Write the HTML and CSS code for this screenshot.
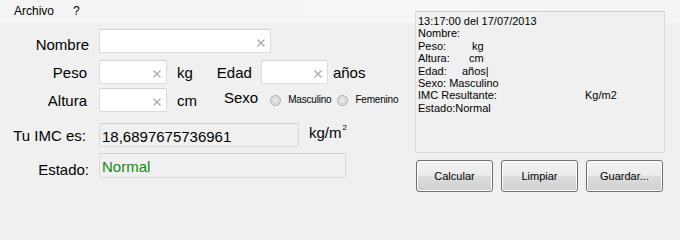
FILE: index.html
```html
<!DOCTYPE html>
<html lang="es">
<head>
<meta charset="utf-8">
<title>Calculadora IMC</title>
<link rel="stylesheet" href="styles.css">
</head>
<body>
<div class="window">
  <div class="menubar">
    <span class="menu-item">Archivo</span>
    <span class="menu-item">?</span>
  </div>

  <div class="form">
    <div class="row row-nombre">
      <label class="label label-low">Nombre</label>
      <div class="field field-wide"><svg class="clear" width="8" height="8" viewBox="0 0 8 8"><path d="M0.5 0.5 L7.5 7.5 M7.5 0.5 L0.5 7.5"/></svg></div>
    </div>
    <div class="row row-peso">
      <label class="label label-in">Peso</label>
      <div class="field field-short"><svg class="clear" width="8" height="8" viewBox="0 0 8 8"><path d="M0.5 0.5 L7.5 7.5 M7.5 0.5 L0.5 7.5"/></svg></div>
      <span class="unit">kg</span>
      <span class="label-edad">Edad</span>
      <div class="field field-edad"><svg class="clear" width="8" height="8" viewBox="0 0 8 8"><path d="M0.5 0.5 L7.5 7.5 M7.5 0.5 L0.5 7.5"/></svg></div>
      <span class="unit-anos">años</span>
    </div>
    <div class="row row-altura">
      <label class="label label-in">Altura</label>
      <div class="field field-short"><svg class="clear" width="8" height="8" viewBox="0 0 8 8"><path d="M0.5 0.5 L7.5 7.5 M7.5 0.5 L0.5 7.5"/></svg></div>
      <span class="unit">cm</span>
      <span class="label-sexo">Sexo</span>
      <span class="radio radio-first"></span><span class="radio-text">Masculino</span>
      <span class="radio"></span><span class="radio-text">Femenino</span>
    </div>
    <div class="row row-imc">
      <label class="label label-imc">Tu IMC es:</label>
      <div class="box box-imc">18,6897675736961</div>
      <span class="unit-imc">kg/m<sup class="sq">2</sup></span>
    </div>
    <div class="row row-estado">
      <label class="label label-low label-estado">Estado:</label>
      <div class="box box-estado">Normal</div>
    </div>
  </div>

  <div class="panel">
    <div class="log">
      <div>13:17:00 del 17/07/2013</div>
      <div>Nombre:</div>
      <div><span class="key key-peso">Peso:</span>kg</div>
      <div><span class="key key-altura">Altura:</span>cm</div>
      <div><span class="key key-edad">Edad:</span>años<span class="caret">|</span></div>
      <div>Sexo: Masculino</div>
      <div><span class="key key-imc">IMC Resultante:</span>Kg/m2</div>
      <div>Estado:Normal</div>
    </div>
    <div class="buttons">
      <button class="btn" type="button">Calcular</button>
      <button class="btn" type="button">Limpiar</button>
      <button class="btn" type="button">Guardar...</button>
    </div>
  </div>
</div>
</body>
</html>
```

FILE: styles.css
```css
html, body {
  margin: 0;
  padding: 0;
  background: #f0f0f0;
}

body {
  font-family: "Liberation Sans", Arial, sans-serif;
  color: #000;
}

.window {
  width: 680px;
  height: 209px;
  display: grid;
  grid-template-columns: 415px 250px 1fr;
  grid-template-rows: 23px auto;
  background: #f0f0f0;
  overflow: hidden;
}

/* ---------- menu ---------- */
.menubar {
  grid-column: 1 / 4;
  grid-row: 1;
  display: flex;
  align-items: center;
  background: linear-gradient(90deg, #f4f4f4 0%, #f6f6f6 60%, #f4f4f4 100%);
  font-size: 12px;
  line-height: 23px;
  padding-left: 14px;
}

.menu-item {
  margin-right: 19px;
}

/* ---------- form ---------- */
.form {
  grid-column: 1;
  grid-row: 2;
  display: flex;
  flex-direction: column;
  font-size: 15px;
  line-height: 17px;
}

.row {
  display: flex;
  align-items: center;
  height: 24px;
}

.row-nombre { margin-top: 6px; }
.row-peso { margin-top: 7px; }
.row-altura { margin-top: 4px; }
.row-imc { margin-top: 11px; }
.row-estado { margin-top: 6px; height: 25px; }

.label {
  box-sizing: border-box;
  width: 89px;
  margin-right: 10px;
  text-align: right;
  flex: none;
}

.label-low {
  align-self: flex-start;
  padding-top: 7px;
}

.label-estado {
  padding-top: 8px;
}

.label-in {
  padding-right: 2px;
}

.label-imc {
  padding-right: 3px;
}

.field {
  box-sizing: border-box;
  height: 24px;
  background: #ffffff;
  border: 1px solid #dcdcdc;
  border-top-color: #d2d2d2;
  border-radius: 2px;
  display: flex;
  justify-content: flex-end;
  align-items: center;
  padding-right: 5px;
  padding-top: 4px;
  flex: none;
}

.field-wide { width: 172px; }
.field-short { width: 68px; }
.field-edad { width: 67px; margin-left: 9px; }

.clear path {
  stroke: #a6a6a6;
  stroke-width: 1.2;
  fill: none;
}

.unit {
  margin-left: 10px;
}

.label-edad {
  margin-left: 24px;
}

.unit-anos {
  margin-left: 5px;
}

.label-sexo {
  margin-left: 27px;
  margin-bottom: 5px;
}

.radio {
  box-sizing: border-box;
  width: 11px;
  height: 11px;
  border-radius: 50%;
  border: 1px solid #a9a9a9;
  background: radial-gradient(circle at 50% 50%, #e6e6e6 0 2px, #d4d4d4 3px, #f4f4f4 5px);
  margin-left: 6px;
  flex: none;
}

.radio-first {
  margin-left: 12px;
}

.radio-text {
  font-size: 10px;
  line-height: 12px;
  letter-spacing: -0.2px;
  margin-left: 7px;
}

.box {
  box-sizing: border-box;
  background: #f0f0f0;
  border: 1px solid #dadada;
  border-top-color: #cfcfcf;
  border-radius: 2px;
  padding-left: 2px;
  padding-top: 4px;
  flex: none;
  align-self: stretch;
}

.box-imc {
  width: 200px;
}

.box-estado {
  width: 247px;
  color: #108a10;
}

.unit-imc {
  margin-left: 10px;
  align-self: flex-start;
  margin-top: 1px;
}

.sq {
  font-size: 8px;
  line-height: 0;
  vertical-align: 8px;
  margin-left: 1px;
}

/* ---------- right panel ---------- */
.panel {
  grid-column: 2;
  grid-row: 1 / 3;
  margin-top: 11px;
  display: flex;
  flex-direction: column;
}

.log {
  box-sizing: border-box;
  height: 142px;
  background: #f0f0f0;
  border: 1px solid #d9d9d9;
  border-top-color: #cdcdcd;
  padding: 3px 2px;
  font-size: 11px;
  line-height: 12.4px;
  white-space: nowrap;
}

.key {
  display: inline-block;
}

.key-peso { width: 54px; }
.key-altura { width: 51px; }
.key-edad { width: 44px; }
.key-imc { width: 167px; }

.caret {
  margin-left: 0;
}

.buttons {
  display: flex;
  gap: 8px;
  margin-top: 7px;
  padding-left: 1px;
}

.btn {
  box-sizing: border-box;
  width: 77px;
  height: 32px;
  padding: 0;
  font-family: "Liberation Sans", Arial, sans-serif;
  font-size: 11px;
  color: #000;
  border: 1px solid #707070;
  border-radius: 3px;
  background: linear-gradient(#f2f2f2 0%, #ebebeb 48%, #dddddd 52%, #cfcfcf 100%);
  box-shadow: inset 0 0 0 1px #fbfbfb;
}
```
